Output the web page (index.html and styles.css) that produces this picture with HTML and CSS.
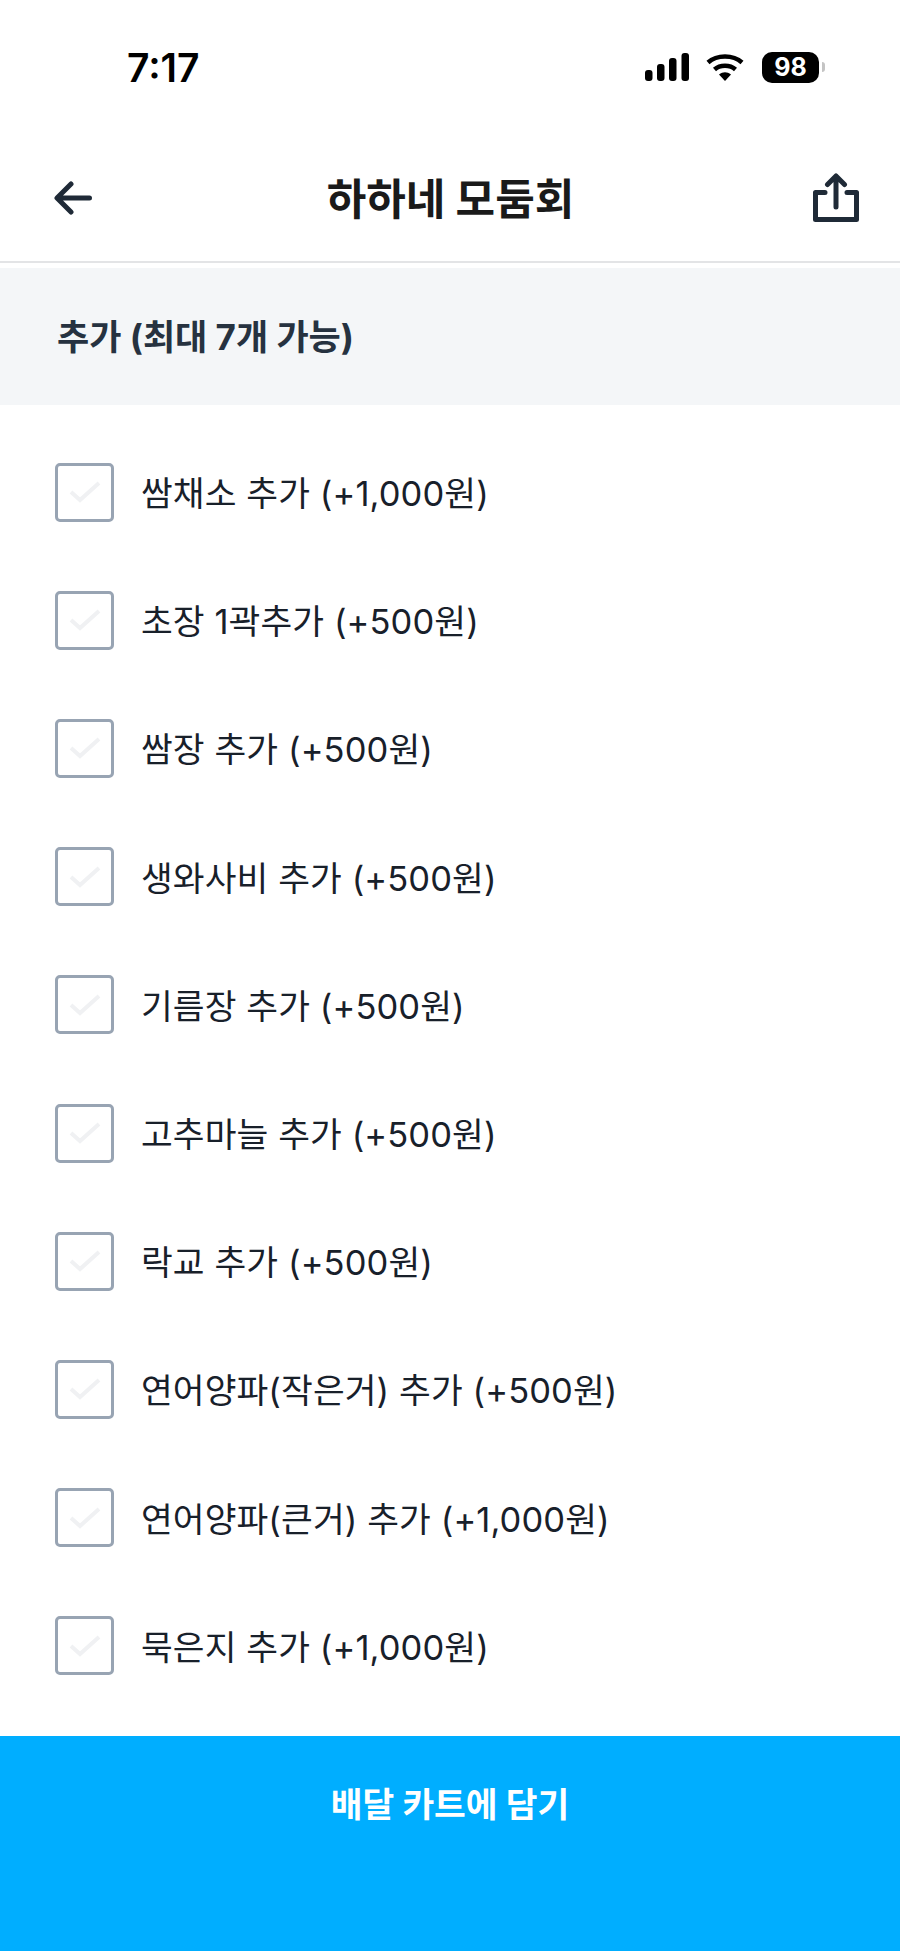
FILE: index.html
```html
<!DOCTYPE html>
<html lang="ko">
<head>
  <meta charset="UTF-8" />
  <meta name="viewport" content="width=device-width, initial-scale=1" />
  <title>하하네 모둠회</title>
  <link rel="stylesheet" href="styles.css">
</head>
<body>
  <div class="status">
    <span class="time">7:17</span>
    <div class="status-icons">
      <svg class="signal" width="44" height="28" viewBox="0 0 44 28">
        <rect x="0" y="17" width="7.500" height="11" rx="3" />
        <rect x="12" y="11" width="7.500" height="17" rx="3" />
        <rect x="24" y="5" width="7.500" height="23" rx="3" />
        <rect x="36.500" y="0" width="7.500" height="28" rx="3" />
      </svg>
      <svg class="wifi" width="38" height="28" viewBox="0 0 38 28">
        <path d="M2 9.500C11 1.500 27 1.500 36 9.500" fill="none" stroke="#000" stroke-width="4.500" />
        <path d="M8.500 16.500C14 11.500 24 11.500 29.500 16.500" fill="none" stroke="#000" stroke-width="4.500" />
        <path d="M13 21.500C17 18.500 21 18.500 25 21.500L19 28Z" />
      </svg>
      <div class="battery"><span class="battery-num">98</span></div>
      <span class="battery-cap"></span>
    </div>
  </div>

  <header class="nav">
    <svg class="nav-icon" width="38" height="34" viewBox="0 0 38 34">
      <path d="M35.500 17H3.500M17 3L3 17L17 31" fill="none" stroke="#1f2a37" stroke-width="5" stroke-linecap="round" stroke-linejoin="round" />
    </svg>
    <h1>하하네 모둠회</h1>
    <svg class="nav-icon" width="46" height="49" viewBox="0 0 46 49">
      <path d="M12 19.500H2.500V46.500H43.500V19.500H34" fill="none" stroke="#1f2a37" stroke-width="5" stroke-linejoin="round" stroke-linecap="round" />
      <path d="M23 34V3M14.500 11.500L23 3L31.500 11.500" fill="none" stroke="#1f2a37" stroke-width="5" stroke-linejoin="round" stroke-linecap="round" />
    </svg>
  </header>

  <section class="group-title">추가 (최대 7개 가능)</section>

  <ul class="options">
    <li class="option"><span class="check"><svg width="32" height="22" viewBox="0 0 32 22"><path d="M2 11L11 19L30 2" /></svg></span><span class="option-label">쌈채소 추가 (+1,000원)</span></li>
    <li class="option"><span class="check"><svg width="32" height="22" viewBox="0 0 32 22"><path d="M2 11L11 19L30 2" /></svg></span><span class="option-label">초장 1곽추가 (+500원)</span></li>
    <li class="option"><span class="check"><svg width="32" height="22" viewBox="0 0 32 22"><path d="M2 11L11 19L30 2" /></svg></span><span class="option-label">쌈장 추가 (+500원)</span></li>
    <li class="option"><span class="check"><svg width="32" height="22" viewBox="0 0 32 22"><path d="M2 11L11 19L30 2" /></svg></span><span class="option-label">생와사비 추가 (+500원)</span></li>
    <li class="option"><span class="check"><svg width="32" height="22" viewBox="0 0 32 22"><path d="M2 11L11 19L30 2" /></svg></span><span class="option-label">기름장 추가 (+500원)</span></li>
    <li class="option"><span class="check"><svg width="32" height="22" viewBox="0 0 32 22"><path d="M2 11L11 19L30 2" /></svg></span><span class="option-label">고추마늘 추가 (+500원)</span></li>
    <li class="option"><span class="check"><svg width="32" height="22" viewBox="0 0 32 22"><path d="M2 11L11 19L30 2" /></svg></span><span class="option-label">락교 추가 (+500원)</span></li>
    <li class="option"><span class="check"><svg width="32" height="22" viewBox="0 0 32 22"><path d="M2 11L11 19L30 2" /></svg></span><span class="option-label">연어양파(작은거) 추가 (+500원)</span></li>
    <li class="option"><span class="check"><svg width="32" height="22" viewBox="0 0 32 22"><path d="M2 11L11 19L30 2" /></svg></span><span class="option-label">연어양파(큰거) 추가 (+1,000원)</span></li>
    <li class="option"><span class="check"><svg width="32" height="22" viewBox="0 0 32 22"><path d="M2 11L11 19L30 2" /></svg></span><span class="option-label">묵은지 추가 (+1,000원)</span></li>
  </ul>

  <button class="cart-btn" type="button">배달 카트에 담기</button>
</body>
</html>
```

FILE: styles.css
```css
* {
  margin: 0;
  padding: 0;
  box-sizing: border-box;
}
body {
  width: 900px;
  height: 1951px;
  background: #fff;
  color: #111;
  font-family: Inter, "Noto Sans CJK KR", sans-serif;
  display: flex;
  flex-direction: column;
  overflow: hidden;
}
.status {
  height: 134px;
  padding: 0 75px 0 127px;
  display: flex;
  justify-content: space-between;
  align-items: center;
  flex-shrink: 0;
}
.time {
  font-size: 39px;
  font-weight: 600;
  color: #000;
}
.status-icons {
  display: flex;
  align-items: center;
}
.signal {
  margin-right: 17px;
}
.wifi {
  margin-right: 18px;
}
.battery {
  width: 57px;
  height: 31px;
  border-radius: 10px;
  background: #000;
  color: #fff;
  display: flex;
  align-items: center;
  justify-content: center;
}
.battery-num {
  font-size: 25px;
  font-weight: 700;
}
.battery-cap {
  width: 3px;
  height: 10px;
  margin-left: 3px;
  border-radius: 0 3px 3px 0;
  background: #c4c4c4;
}
.nav {
  height: 129px;
  padding: 0 41px 0 54px;
  display: flex;
  justify-content: space-between;
  align-items: center;
  border-bottom: 2px solid #e3e4e6;
  flex-shrink: 0;
}
.nav h1 {
  font-size: 43px;
  font-weight: 700;
  color: #1a1a1a;
  margin: 0 4px 4px 0;
}
.group-title {
  margin-top: 5px;
  height: 137px;
  padding: 0 0 5px 57px;
  display: flex;
  align-items: center;
  background: #f4f6f8;
  font-size: 35px;
  font-weight: 700;
  color: #263240;
  flex-shrink: 0;
}
.options {
  list-style: none;
  flex: 1;
  padding-top: 23px;
}
.option {
  height: 128.200px;
  padding-left: 55px;
  display: flex;
  align-items: center;
  gap: 27px;
  font-size: 34.500px;
  letter-spacing: 0.100px;
  color: #18202a;
}
.option-label {
  margin-bottom: 2px;
}
.check {
  width: 59px;
  height: 59px;
  border: 3px solid #98a4b3;
  border-radius: 5px;
  display: flex;
  align-items: center;
  justify-content: center;
}
.check path {
  fill: none;
  stroke: #f0f1f3;
  stroke-width: 4;
}
.cart-btn {
  height: 215px;
  padding-bottom: 84px;
  border: none;
  background: #00aeff;
  color: #fff;
  font-family: inherit;
  font-size: 34.500px;
  font-weight: 700;
  flex-shrink: 0;
}
```
